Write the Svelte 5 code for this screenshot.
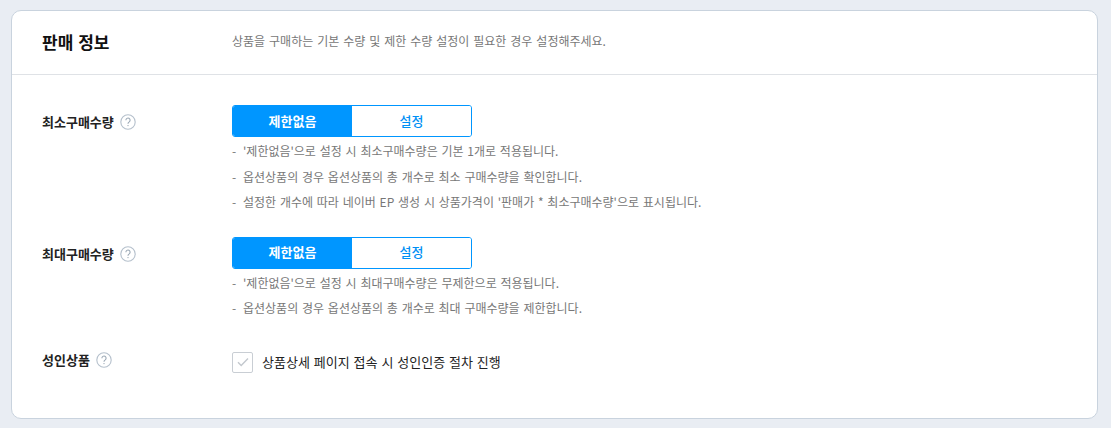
<script>
	const sections = [
		{
			label: "최소구매수량",
			notes: [
				"'제한없음'으로 설정 시 최소구매수량은 기본 1개로 적용됩니다.",
				"옵션상품의 경우 옵션상품의 총 개수로 최소 구매수량을 확인합니다.",
				"설정한 개수에 따라 네이버 EP 생성 시 상품가격이 '판매가 * 최소구매수량'으로 표시됩니다.",
			],
		},
		{
			label: "최대구매수량",
			notes: [
				"'제한없음'으로 설정 시 최대구매수량은 무제한으로 적용됩니다.",
				"옵션상품의 경우 옵션상품의 총 개수로 최대 구매수량을 제한합니다.",
			],
		},
	];
</script>

{#snippet help()}
	<svg class="help" width="16" height="16" viewBox="0 0 16 16" aria-hidden="true">
		<circle cx="8" cy="8" r="7.2" fill="none" stroke="#b5c0cc" stroke-width="1.1" />
		<path d="M5.9 6.2a2.1 2.1 0 1 1 3.3 1.7c-.8.5-1.2.9-1.2 1.8" fill="none" stroke="#9aa7b4" stroke-width="1.1" />
		<circle cx="8" cy="11.6" r=".7" fill="#9aa7b4" />
	</svg>
{/snippet}

<div class="page">
	<section class="card">
		<header class="head">
			<h2>판매 정보</h2>
			<p>상품을 구매하는 기본 수량 및 제한 수량 설정이 필요한 경우 설정해주세요.</p>
		</header>
		<div class="body">
			{#each sections as s}
				<div class="row">
					<div class="label">{s.label}{@render help()}</div>
					<div class="field">
						<div class="toggle">
							<button class="on">제한없음</button>
							<button>설정</button>
						</div>
						<ul>
							{#each s.notes as n}
								<li>{n}</li>
							{/each}
						</ul>
					</div>
				</div>
			{/each}
			<div class="row adult">
				<div class="label">성인상품{@render help()}</div>
				<label class="check">
					<span class="box">
						<svg width="12" height="10" viewBox="0 0 12 10" aria-hidden="true">
							<path d="M1 5.2l3.2 3.2L11 1.4" fill="none" stroke="#c3c8ce" stroke-width="1.4" />
						</svg>
					</span>
					상품상세 페이지 접속 시 성인인증 절차 진행
				</label>
			</div>
		</div>
	</section>
</div>

<style>
	:global(body) {
		background: #e9edf3;
	}
	.page {
		padding: 10px 13px 9px 11px;
		font-family: "Noto Sans CJK KR", "Noto Sans", sans-serif;
		color: #222;
	}
	.card {
		background: #fff;
		border: 1px solid #c9d3de;
		border-radius: 10px;
		height: 409px;
		box-sizing: border-box;
	}
	.head {
		display: flex;
		align-items: center;
		height: 63px;
		border-bottom: 1px solid #dfe2e6;
		padding-left: 30px;
	}
	h2 {
		margin: 0 0 2px;
		width: 190px;
		font-size: 17px;
		font-weight: 700;
		color: #111;
		line-height: 24px;
		word-spacing: 1px;
	}
	.head p {
		margin: 0 0 4px;
		font-size: 12px;
		color: #777;
		line-height: 18px;
		word-spacing: 1.25px;
	}
	.body {
		padding: 30px 0 0 30px;
	}
	.row {
		display: flex;
		align-items: flex-start;
		margin-bottom: 22px;
	}
	.row:nth-child(2) {
		margin-bottom: 31px;
	}
	.label {
		width: 190px;
		display: flex;
		align-items: center;
		gap: 6px;
		font-size: 13px;
		font-weight: 700;
		color: #222;
		line-height: 20px;
		padding-top: 7px;
	}
	.toggle {
		display: flex;
		width: 240px;
		height: 32px;
		box-sizing: border-box;
		border: 1px solid #0096ff;
		border-radius: 3px;
		overflow: hidden;
	}
	.toggle button {
		flex: 1;
		border: 0;
		padding: 0 0 2px;
		background: #fff;
		color: #0090f5;
		font: 500 13px "Noto Sans CJK KR", sans-serif;
	}
	.toggle button.on {
		background: #0096ff;
		color: #fff;
		font-weight: 700;
	}
	ul {
		list-style: none;
		margin: 1px 0 0;
		padding: 0;
	}
	li {
		font-size: 12px;
		line-height: 25.5px;
		color: #777;
		padding-left: 11px;
		position: relative;
		word-spacing: 1.1px;
	}
	li::before {
		content: "-";
		position: absolute;
		left: 0;
	}
	.adult {
		margin-bottom: 0;
	}
	.adult .label {
		padding-top: 0;
		margin-top: -2px;
	}
	.check {
		display: flex;
		align-items: center;
		gap: 9px;
		font-size: 13px;
		color: #222;
		line-height: 20px;
		word-spacing: 1px;
	}
	.box {
		width: 21px;
		height: 21px;
		box-sizing: border-box;
		border: 1px solid #c9ced4;
		border-radius: 2px;
		display: flex;
		align-items: center;
		justify-content: center;
	}
</style>
